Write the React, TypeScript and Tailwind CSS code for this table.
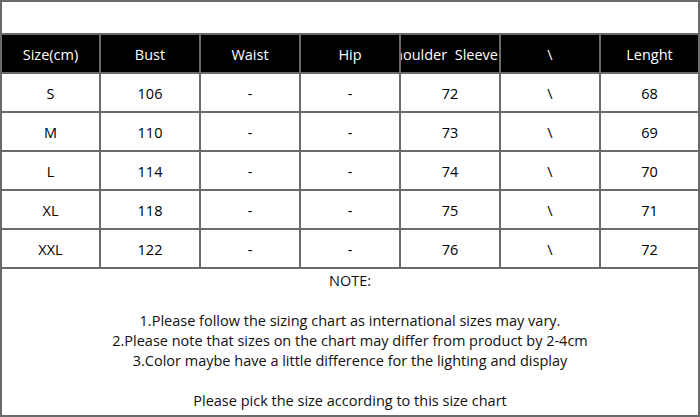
const headers = ["Size(cm)", "Bust", "Waist", "Hip", "Shoulder  Sleeve", "\\", "Lenght"];

const rows = [
  ["S", "106", "-", "-", "72", "\\", "68"],
  ["M", "110", "-", "-", "73", "\\", "69"],
  ["L", "114", "-", "-", "74", "\\", "70"],
  ["XL", "118", "-", "-", "75", "\\", "71"],
  ["XXL", "122", "-", "-", "76", "\\", "72"],
];

const notes = [
  "1.Please follow the sizing chart as international sizes may vary.",
  "2.Please note that sizes on the chart may differ from product by 2-4cm",
  "3.Color maybe have a little difference for the lighting and display",
];

export default function App() {
  return (
    <div
      className="w-[700px] h-[417px] border-2 border-[#6b6b6b] bg-white flex flex-col text-[14.5px] text-black"
      style={{ fontFamily: '"Open Sans", "Noto Sans", sans-serif' }}
    >
      {/* blank header area */}
      <div className="h-[31px] shrink-0" />

      {/* table */}
      <div className="grid grid-cols-[97px_98px_98px_98px_98px_98px_97px] gap-[2px] bg-[#6b6b6b] border-y-2 border-[#6b6b6b]">
        {headers.map((h, i) => (
          <div
            key={i}
            className={`h-[37px] bg-black text-white flex items-center pt-[3px] overflow-hidden whitespace-pre ${
              i === 4 ? "justify-end pr-[1px]" : "justify-center"
            }`}
          >
            {h}
          </div>
        ))}
        {rows.map((r, ri) =>
          r.map((c, ci) => (
            <div key={`${ri}-${ci}`} className="h-[37px] bg-white flex items-center justify-center pt-[3px]">
              {c}
            </div>
          ))
        )}
      </div>

      {/* notes */}
      <div className="flex-1 flex flex-col items-center text-[#111] leading-[20px]">
        <div className="mt-[2px]">NOTE:</div>
        <div className="mt-[20px]">{notes[0]}</div>
        <div>{notes[1]}</div>
        <div>{notes[2]}</div>
        <div className="mt-[20px]">Please pick the size according to this size chart</div>
      </div>
    </div>
  );
}
